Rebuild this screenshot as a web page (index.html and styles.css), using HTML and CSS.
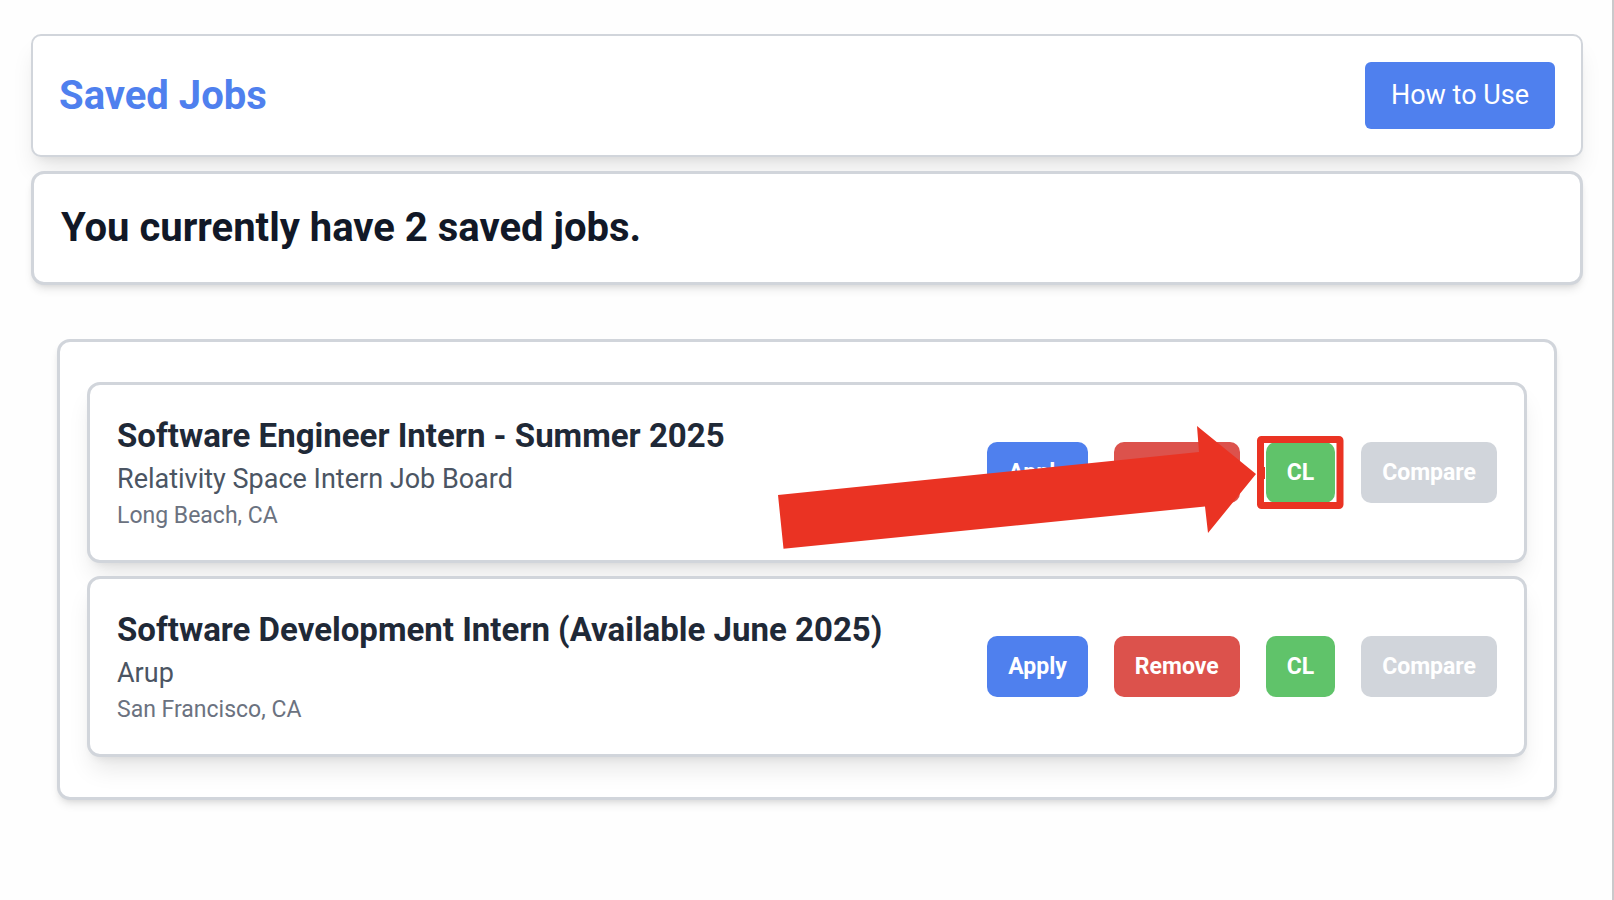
FILE: index.html
```html
<!DOCTYPE html>
<html lang="en">
<head>
  <meta charset="utf-8">
  <meta name="viewport" content="width=device-width, initial-scale=1">
  <title>Saved Jobs</title>
  <link rel="stylesheet" href="styles.css">
</head>
<body>
  <main class="page">
    <header class="header">
      <h1 class="header-title">Saved Jobs</h1>
      <button type="button" class="help-button">How to Use</button>
    </header>

    <section class="summary">
      <h2 class="summary-text">You currently have 2 saved jobs.</h2>
    </section>

    <ul class="job-list">
      <li class="job">
        <div class="job-info">
          <h3 class="job-title">Software Engineer Intern - Summer 2025</h3>
          <p class="job-company">Relativity Space Intern Job Board</p>
          <p class="job-location">Long Beach, CA</p>
        </div>
        <div class="actions">
          <button type="button" class="action apply">Apply</button>
          <button type="button" class="action remove">Remove</button>
          <div class="callout">
            <button type="button" class="action letter">CL</button>
            <svg class="callout-arrow" width="566" height="107" viewBox="0 0 566 107" aria-hidden="true">
              <path fill="#ea3323" d="M0 69 421 26 419 0 478 48 430 107 427 80.500 5.500 122.700Z"/>
              <rect x="482.500" y="13.500" width="79.500" height="66" rx="1" fill="none" stroke="#ea3323" stroke-width="7"/>
              <path fill="#ea3323" d="M485 41h2v12h-2z"/>
            </svg>
          </div>
          <button type="button" class="action compare" disabled>Compare</button>
        </div>
      </li>
      <li class="job">
        <div class="job-info">
          <h3 class="job-title">Software Development Intern (Available June 2025)</h3>
          <p class="job-company">Arup</p>
          <p class="job-location">San Francisco, CA</p>
        </div>
        <div class="actions">
          <button type="button" class="action apply">Apply</button>
          <button type="button" class="action remove">Remove</button>
          <button type="button" class="action letter">CL</button>
          <button type="button" class="action compare" disabled>Compare</button>
        </div>
      </li>
    </ul>
  </main>
</body>
</html>
```
FILE: styles.css
```css
* {
  box-sizing: border-box;
}

body {
  margin: 0;
  min-height: 100vh;
  border-right: 2px solid #c9c9cb;
  background: #fefefe;
  font-family: Roboto, "Liberation Sans", sans-serif;
}

h1,
h2,
h3,
p,
ul {
  margin: 0;
  padding: 0;
}

button {
  border: 0;
  font-family: inherit;
  color: #fff;
  cursor: pointer;
}

.page {
  padding: 34px 29px 34px 31px;
}

.header {
  display: flex;
  align-items: center;
  justify-content: space-between;
  padding: 26px;
  border: 2px solid #d1d5db;
  border-radius: 10px;
  background: #fff;
  box-shadow: 0 16px 24px -5px rgba(0, 0, 0, 0.1), 0 6px 10px -6px rgba(0, 0, 0, 0.1);
}

.header-title {
  font-size: 40px;
  line-height: 54px;
  font-weight: 700;
  color: #4f80ee;
}

.help-button {
  padding: 13px 26px;
  border-radius: 6px;
  background: #4f80ee;
  font-size: 27px;
  line-height: 41px;
}

.summary {
  position: relative;
  margin-top: 14px;
  padding: 27px;
  border: 3px solid #d1d5db;
  border-radius: 13px;
  background: #fff;
  box-shadow: 0 6px 10px -2px rgba(0, 0, 0, 0.1), 0 3px 6px -3px rgba(0, 0, 0, 0.1);
}

.summary-text {
  font-size: 40px;
  line-height: 54px;
  font-weight: 700;
  color: #111827;
}

.job-list {
  display: flex;
  flex-direction: column;
  gap: 13px;
  margin: 54px 26px 0;
  padding: 40px 27px;
  border: 3px solid #d1d5db;
  border-radius: 13px;
  background: #fff;
  box-shadow: 0 6px 10px -2px rgba(0, 0, 0, 0.1), 0 3px 6px -3px rgba(0, 0, 0, 0.1);
  list-style: none;
}

.job {
  display: flex;
  align-items: center;
  justify-content: space-between;
  gap: 26px;
  padding: 27px;
  border: 3px solid #d1d5db;
  border-radius: 13px;
  background: #fff;
  box-shadow: 0 16px 24px -5px rgba(0, 0, 0, 0.1), 0 6px 10px -6px rgba(0, 0, 0, 0.1);
}

.job-title {
  font-size: 33px;
  line-height: 47px;
  font-weight: 700;
  color: #1f2937;
}

.job-company {
  font-size: 27px;
  line-height: 40px;
  color: #4b5563;
}

.job-location {
  font-size: 23px;
  line-height: 34px;
  color: #6b7280;
}

.actions {
  display: flex;
  gap: 26px;
}

.action {
  padding: 13px 21px;
  border-radius: 10px;
  font-size: 23px;
  line-height: 35px;
  font-weight: 700;
}

.apply {
  background: #4f80ee;
}

.remove {
  background: #dc524c;
}

.letter {
  background: #60c36a;
}

.compare {
  background: #d1d5db;
  cursor: default;
}

.callout {
  position: relative;
}

.callout-arrow {
  position: absolute;
  top: -16px;
  right: -9px;
  overflow: visible;
  pointer-events: none;
}
```
